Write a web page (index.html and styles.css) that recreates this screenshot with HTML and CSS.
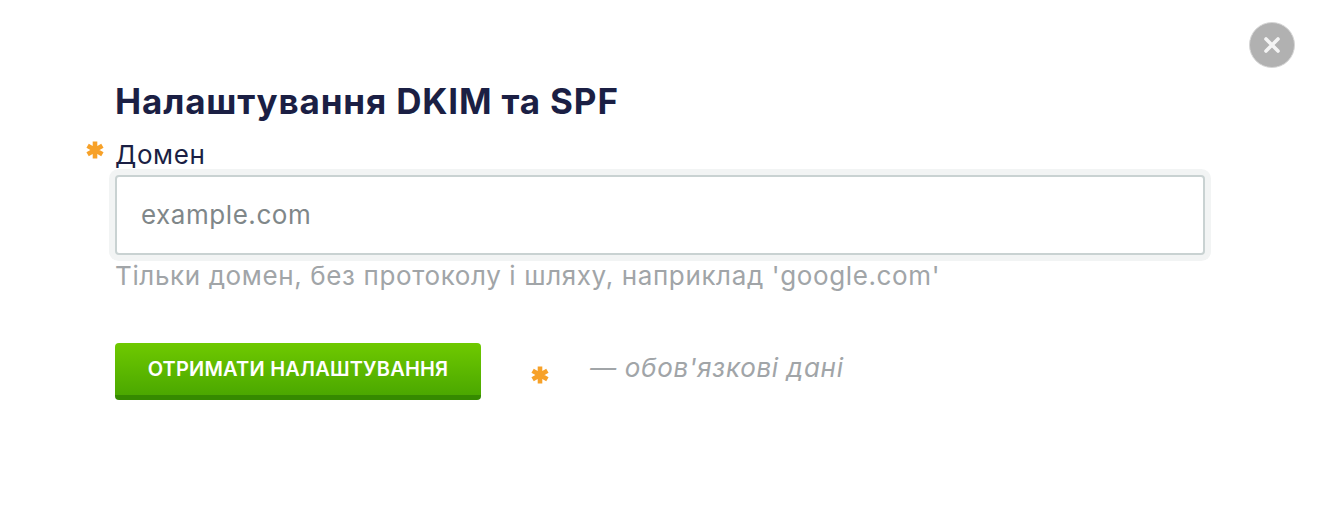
FILE: index.html
```html
<!DOCTYPE html>
<html>
<head>
  <title>DKIM SPF</title>
  <link rel="stylesheet" href="styles.css">
</head>
<body>
  <button class="close-btn" aria-label="Close">
    <svg width="20" height="20" viewBox="0 0 20 20"><path d="M4 4L16 16M16 4L4 16" stroke="#f4f4f4" stroke-width="3.6" stroke-linecap="round"/></svg>
  </button>

  <form class="dkim-form">
    <h1>Налаштування DKIM та SPF</h1>

    <div class="field-label">
      <svg class="star star-label" width="20" height="20" viewBox="0 0 20 20"><path d="M10 1.5V18.5M2.6 5.7L17.4 14.3M17.4 5.7L2.6 14.3" stroke="#f7a128" stroke-width="4.6"/></svg>
      <label for="domain">Домен</label>
    </div>
    <input id="domain" class="field-input" type="text" placeholder="example.com">
    <p class="field-hint">Тільки домен, без протоколу і шляху, наприклад 'google.com'</p>

    <div class="form-footer">
      <button class="submit-btn" type="button">ОТРИМАТИ НАЛАШТУВАННЯ</button>
      <svg class="star star-footer" width="20" height="20" viewBox="0 0 20 20"><path d="M10 1.5V18.5M2.6 5.7L17.4 14.3M17.4 5.7L2.6 14.3" stroke="#f7a128" stroke-width="4.6"/></svg>
      <span class="required-note">— обов'язкові дані</span>
    </div>
  </form>
</body>
</html>
```

FILE: styles.css
```css
body {
  margin: 0;
  background-color: white;
  font-family: Inter, "Noto Sans", sans-serif;
  color: #1b1f44;
}

.close-btn {
  position: absolute;
  top: 22px;
  left: 1249px;
  width: 46px;
  height: 46px;
  padding: 0;
  border: 1px solid #d6d6d6;
  border-radius: 50%;
  background-color: #b1b1b1;
  display: flex;
  align-items: center;
  justify-content: center;
}

.dkim-form {
  width: 1090px;
  padding: 78px 0 0 115px;
}

h1 {
  margin: 0;
  font-size: 35px;
  line-height: 46px;
  font-weight: 700;
  letter-spacing: 0.85px;
}

.field-label {
  position: relative;
  margin-top: 11px;
  font-size: 26px;
  line-height: 40px;
  height: 40px;
  letter-spacing: 0.6px;
}

.star {
  display: block;
}

.star-label {
  position: absolute;
  left: -30px;
  top: 5px;
}

.field-input {
  display: block;
  box-sizing: border-box;
  width: 1090px;
  height: 80px;
  padding: 0 24px 2px;
  border: 2px solid #c9d2d2;
  border-radius: 4px;
  box-shadow: 0 0 0 6px #f2f4f4;
  font-family: inherit;
  font-size: 26px;
  letter-spacing: 0.55px;
  color: #1b1f44;
  outline: none;
}

.field-input::placeholder {
  color: #7f8789;
  opacity: 1;
}

.field-hint {
  margin: 3px 0 0;
  font-size: 26px;
  line-height: 36px;
  letter-spacing: 0.62px;
  color: #a1a5a8;
}

.form-footer {
  display: flex;
  align-items: center;
  margin-top: 49px;
}

.submit-btn {
  width: 366px;
  height: 57px;
  padding: 0 0 1px;
  border: none;
  border-bottom: 5px solid #358a00;
  border-radius: 4px;
  background: linear-gradient(#6fc900, #4ba800);
  color: white;
  font-family: inherit;
  font-size: 20px;
  letter-spacing: 0.2px;
  font-weight: 600;
}

.star-footer {
  margin: 6px 0 0 49px;
}

.required-note {
  margin: -9px 0 0 40px;
  font-size: 26px;
  letter-spacing: 0.7px;
  font-style: italic;
  color: #a1a5a8;
}
```
